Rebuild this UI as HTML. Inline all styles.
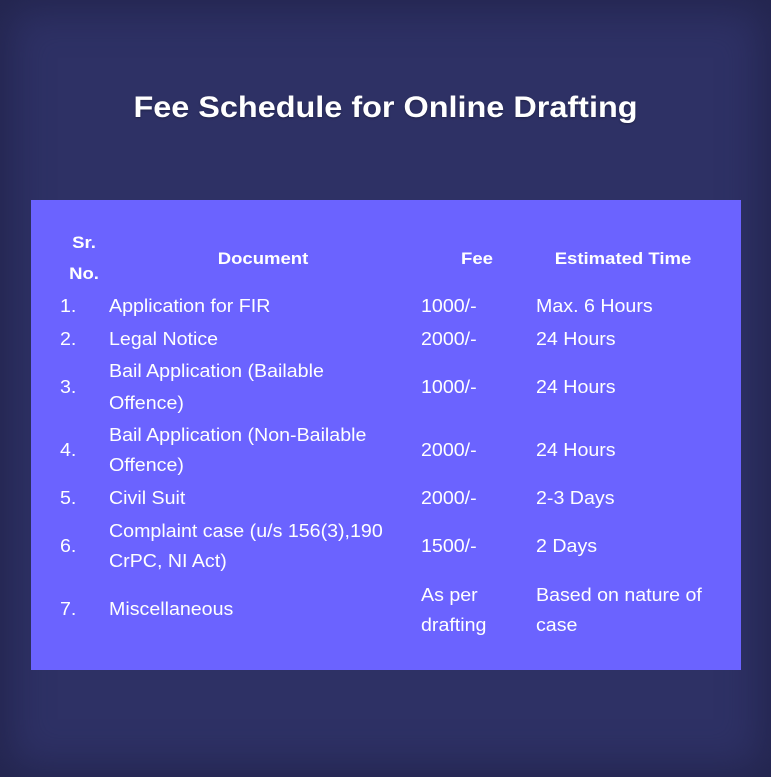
<!DOCTYPE html>
<html><head><style>
body{margin:0;width:771px;height:777px;overflow:hidden;background:#2e3165;box-shadow:inset 0 0 40px 10px #23254e;font-family:"Liberation Sans",sans-serif;color:#fff;position:relative}
.t{position:absolute;line-height:20px;font-size:18px;white-space:nowrap;transform:scaleX(1.09);transform-origin:left center}
.h{font-weight:bold;font-size:17px}
.c{transform:translateX(-50%) scaleX(1.09);transform-origin:center}
#box{position:absolute;left:31px;top:200px;width:710px;height:470px;background:#6b63ff}
h1{position:absolute;left:0;width:771px;top:91px;margin:0;text-align:center;font-size:30px;font-weight:bold;transform:scaleX(1.08);text-shadow:0 1px 2px rgba(0,0,0,.3)}
</style></head><body>
<h1>Fee Schedule for Online Drafting</h1>
<div id="box"></div>
<div class="t h c" style="left:84px;top:233px">Sr.</div>
<div class="t h c" style="left:84px;top:264px">No.</div>
<div class="t h c" style="left:263px;top:249px">Document</div>
<div class="t h c" style="left:477px;top:249px">Fee</div>
<div class="t h c" style="left:623px;top:249px">Estimated Time</div>

<div class="t" style="left:60px;top:296px">1.</div>
<div class="t" style="left:109px;top:296px">Application for FIR</div>
<div class="t" style="left:421px;top:296px">1000/-</div>
<div class="t" style="left:536px;top:296px">Max. 6 Hours</div>

<div class="t" style="left:60px;top:329px">2.</div>
<div class="t" style="left:109px;top:329px">Legal Notice</div>
<div class="t" style="left:421px;top:329px">2000/-</div>
<div class="t" style="left:536px;top:329px">24 Hours</div>

<div class="t" style="left:60px;top:377px">3.</div>
<div class="t" style="left:109px;top:361px">Bail Application (Bailable</div>
<div class="t" style="left:109px;top:393px">Offence)</div>
<div class="t" style="left:421px;top:377px">1000/-</div>
<div class="t" style="left:536px;top:377px">24 Hours</div>

<div class="t" style="left:60px;top:440px">4.</div>
<div class="t" style="left:109px;top:425px">Bail Application (Non-Bailable</div>
<div class="t" style="left:109px;top:455px">Offence)</div>
<div class="t" style="left:421px;top:440px">2000/-</div>
<div class="t" style="left:536px;top:440px">24 Hours</div>

<div class="t" style="left:60px;top:488px">5.</div>
<div class="t" style="left:109px;top:488px">Civil Suit</div>
<div class="t" style="left:421px;top:488px">2000/-</div>
<div class="t" style="left:536px;top:488px">2-3 Days</div>

<div class="t" style="left:60px;top:536px">6.</div>
<div class="t" style="left:109px;top:521px">Complaint case (u/s 156(3),190</div>
<div class="t" style="left:109px;top:551px">CrPC, NI Act)</div>
<div class="t" style="left:421px;top:536px">1500/-</div>
<div class="t" style="left:536px;top:536px">2 Days</div>

<div class="t" style="left:60px;top:599px">7.</div>
<div class="t" style="left:109px;top:599px">Miscellaneous</div>
<div class="t" style="left:421px;top:585px">As per</div>
<div class="t" style="left:421px;top:615px">drafting</div>
<div class="t" style="left:536px;top:585px">Based on nature of</div>
<div class="t" style="left:536px;top:615px">case</div>
</body></html>
